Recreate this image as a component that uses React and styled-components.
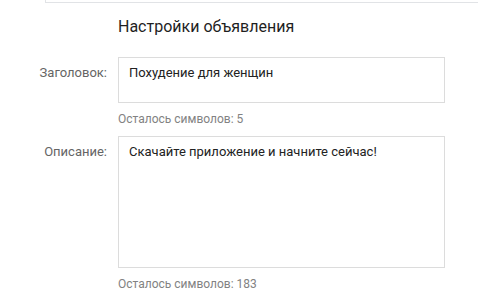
import React from 'react';
import styled, { createGlobalStyle } from 'styled-components';

const GlobalStyle = createGlobalStyle`
  body {
    margin: 0;
    background: #fff;
    font-family: Roboto, "Liberation Sans", Arial, sans-serif;
  }
`;

const Page = styled.div`
  width: 478px;
  height: 289px;
  overflow: hidden;
  background: #fff;
`;

const PrevPanel = styled.div`
  margin-left: 45px;
  height: 2px;
  border-left: 1px solid #e1e3e6;
  border-bottom: 1px solid #e1e3e6;
`;

const Form = styled.div`
  display: grid;
  grid-template-columns: 107px 327px;
  column-gap: 11px;
  padding-top: 14px;
`;

const Heading = styled.h2`
  grid-column: 2;
  margin: 0 0 21px;
  font-size: 16px;
  line-height: 19px;
  font-weight: 400;
  color: #1f1f1f;
`;

const Label = styled.div`
  text-align: right;
  font-size: 13px;
  line-height: 16px;
  color: #656565;
  padding-top: 8px;
`;

const Field = styled.div`
  display: flex;
  flex-direction: column;
`;

const Box = styled.div`
  box-sizing: border-box;
  height: ${p => p.$h}px;
  border: 1px solid #dcdcdc;
  padding: 7px 10px;
  font-size: 13px;
  line-height: 16px;
  color: #222;
`;

const Hint = styled.div`
  font-size: 12px;
  line-height: 16px;
  color: #828282;
  margin: 8px 0 9px;
`;

export default function App() {
  return (
    <Page>
      <GlobalStyle />
      <PrevPanel />
      <Form>
        <Heading>Настройки объявления</Heading>
        <Label>Заголовок:</Label>
        <Field>
          <Box $h={46}>Похудение для женщин</Box>
          <Hint>Осталось символов: 5</Hint>
        </Field>
        <Label>Описание:</Label>
        <Field>
          <Box $h={132}>Скачайте приложение и начните сейчас!</Box>
          <Hint>Осталось символов: 183</Hint>
        </Field>
      </Form>
    </Page>
  );
}
